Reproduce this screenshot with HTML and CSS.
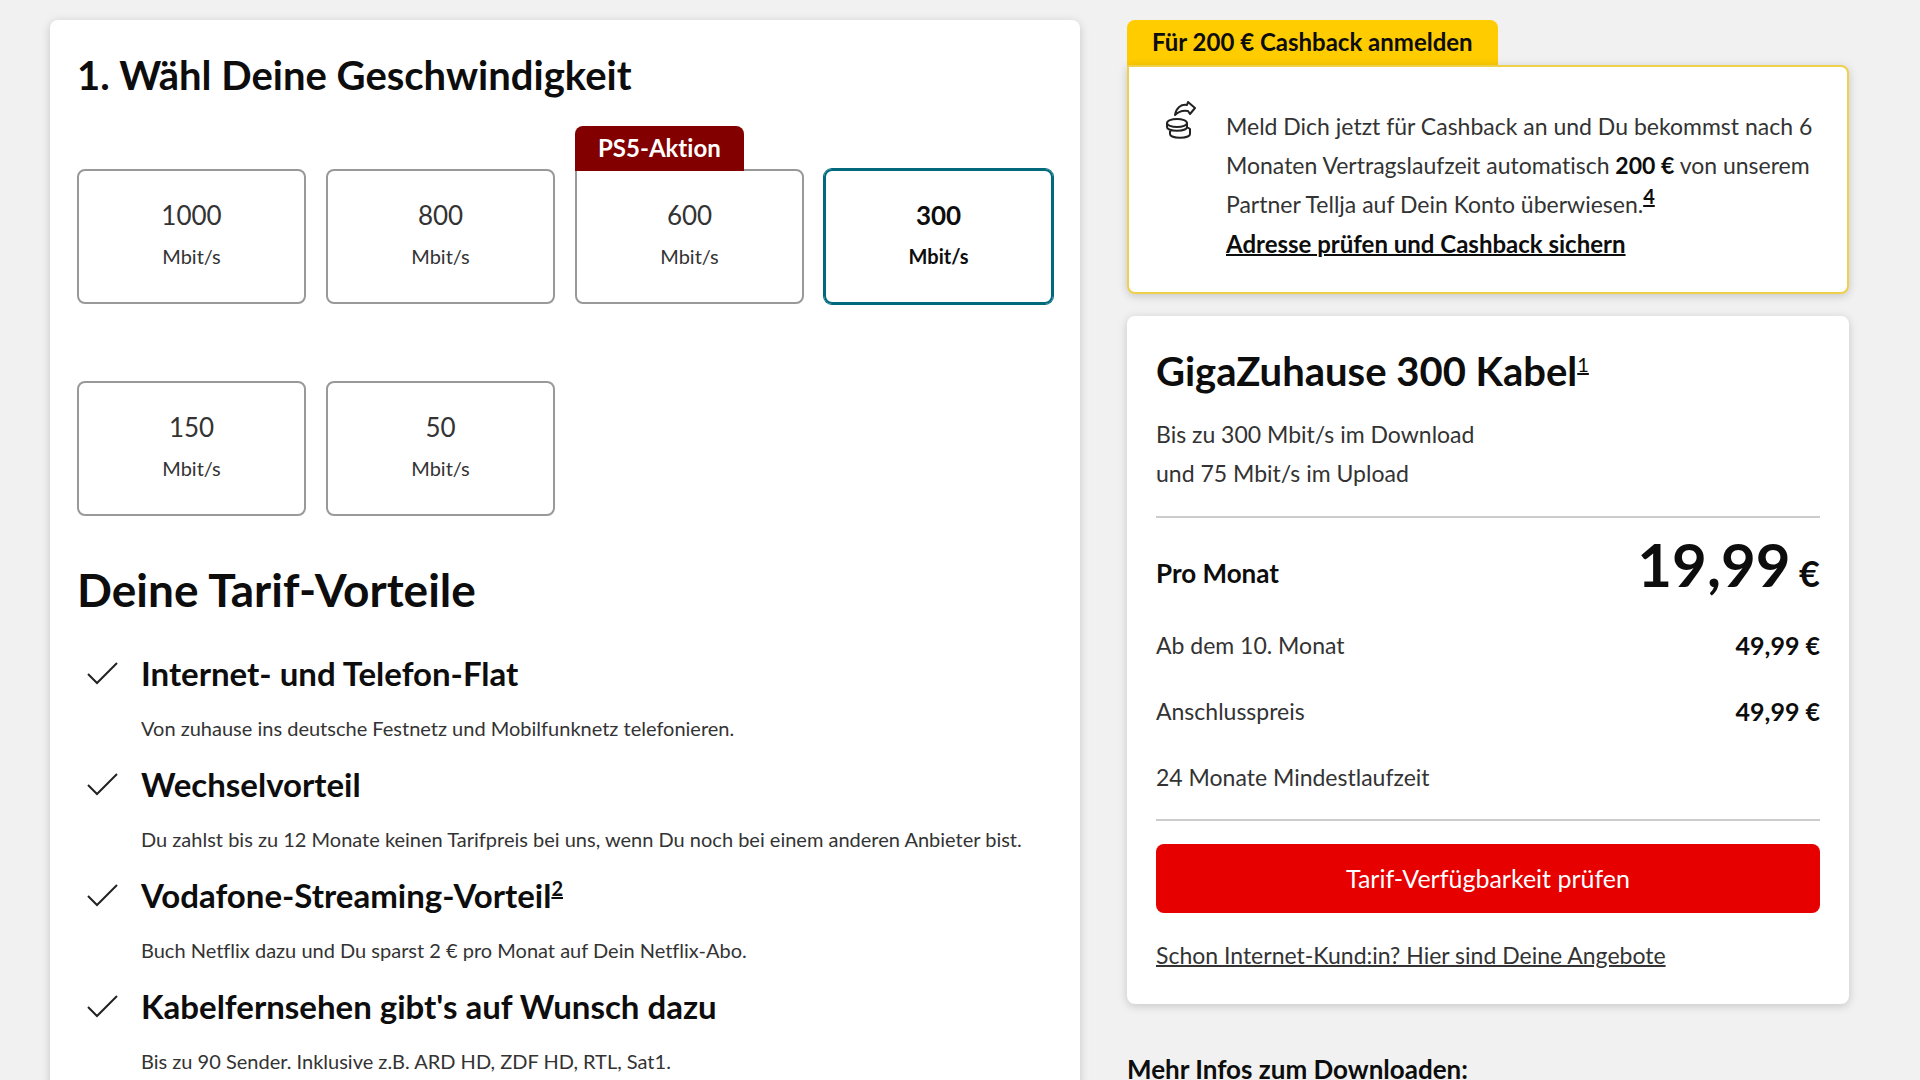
FILE: index.html
```
<!DOCTYPE html>
<html lang="de">
<head>
  <meta charset="utf-8">
  <meta name="viewport" content="width=device-width, initial-scale=1">
  <title>GigaZuhause 300 Kabel</title>
  <link rel="stylesheet" href="styles.css">
</head>
<body>
  <svg width="0" height="0" class="sprite" aria-hidden="true">
    <symbol id="check" viewBox="0 0 36 36">
      <path d="M4 21l9 9L33 10"/>
    </symbol>
  </svg>

  <main class="page">
    <!-- Tariff selection -->
    <section class="card card-main">
      <h1>1. Wähl Deine Geschwindigkeit</h1>

      <div class="speeds" role="radiogroup" aria-label="Geschwindigkeit">
        <label class="speed">
          <input type="radio" name="speed" value="1000">
          <span class="speed-value">1000</span>
          <span class="speed-unit">Mbit/s</span>
        </label>
        <label class="speed">
          <input type="radio" name="speed" value="800">
          <span class="speed-value">800</span>
          <span class="speed-unit">Mbit/s</span>
        </label>
        <label class="speed speed-promo">
          <input type="radio" name="speed" value="600">
          <span class="speed-flag">PS5-Aktion</span>
          <span class="speed-value">600</span>
          <span class="speed-unit">Mbit/s</span>
        </label>
        <label class="speed">
          <input type="radio" name="speed" value="300" checked>
          <span class="speed-value">300</span>
          <span class="speed-unit">Mbit/s</span>
        </label>
        <label class="speed">
          <input type="radio" name="speed" value="150">
          <span class="speed-value">150</span>
          <span class="speed-unit">Mbit/s</span>
        </label>
        <label class="speed">
          <input type="radio" name="speed" value="50">
          <span class="speed-value">50</span>
          <span class="speed-unit">Mbit/s</span>
        </label>
      </div>

      <h2>Deine Tarif-Vorteile</h2>
      <ul class="benefits">
        <li class="benefit">
          <svg class="check"><use href="#check"/></svg>
          <div>
            <h3>Internet- und Telefon-Flat</h3>
            <p>Von zuhause ins deutsche Festnetz und Mobilfunknetz telefonieren.</p>
          </div>
        </li>
        <li class="benefit">
          <svg class="check"><use href="#check"/></svg>
          <div>
            <h3>Wechselvorteil</h3>
            <p>Du zahlst bis zu 12 Monate keinen Tarifpreis bei uns, wenn Du noch bei einem anderen Anbieter bist.</p>
          </div>
        </li>
        <li class="benefit">
          <svg class="check"><use href="#check"/></svg>
          <div>
            <h3>Vodafone-Streaming-Vorteil<sup><a href="#fn2">2</a></sup></h3>
            <p>Buch Netflix dazu und Du sparst 2 € pro Monat auf Dein Netflix-Abo.</p>
          </div>
        </li>
        <li class="benefit">
          <svg class="check"><use href="#check"/></svg>
          <div>
            <h3>Kabelfernsehen gibt's auf Wunsch dazu</h3>
            <p>Bis zu 90 Sender. Inklusive z.B. ARD HD, ZDF HD, RTL, Sat1.</p>
          </div>
        </li>
      </ul>
    </section>

    <aside class="sidebar">
      <!-- Cashback -->
      <section class="cashback">
        <div class="cashback-tab">Für 200 € Cashback anmelden</div>
        <div class="cashback-box">
          <svg class="cashback-icon" viewBox="0 0 40 40" aria-hidden="true">
            <path d="M13 15C14 8 19 4 25 5L26 2l7 6-5 6-2-3C21 10 17 11 13 15z"/>
            <ellipse cx="15" cy="23" rx="10" ry="4"/>
            <path d="M5 23v4c0 5 20 5 20 0v-4M8 30v4c0 5 20 5 20 0v-5l-3-2"/>
          </svg>
          <div class="cashback-text">
            <p>Meld Dich jetzt für Cashback an und Du bekommst nach 6 Monaten Vertragslaufzeit automatisch <strong>200 €</strong> von unserem Partner Tellja auf Dein Konto überwiesen.<sup><a href="#fn4">4</a></sup></p>
            <a class="cashback-link" href="#cashback">Adresse prüfen und Cashback sichern</a>
          </div>
        </div>
      </section>

      <!-- Price summary -->
      <section class="card card-price">
        <h2 class="tariff-name">GigaZuhause 300 Kabel<sup><a href="#fn1">1</a></sup></h2>
        <p class="tariff-info">Bis zu 300 Mbit/s im Download<br>und 75 Mbit/s im Upload</p>
        <dl class="prices">
          <div class="price-row price-main">
            <dt>Pro Monat</dt>
            <dd>19,99 <span class="currency">€</span></dd>
          </div>
          <div class="price-row">
            <dt>Ab dem 10. Monat</dt>
            <dd>49,99 €</dd>
          </div>
          <div class="price-row">
            <dt>Anschlusspreis</dt>
            <dd>49,99 €</dd>
          </div>
          <div class="price-row">
            <dt>24 Monate Mindestlaufzeit</dt>
          </div>
        </dl>
        <button type="button" class="btn">Tarif-Verfügbarkeit prüfen</button>
        <a class="offers-link" href="#angebote">Schon Internet-Kund:in? Hier sind Deine Angebote</a>
      </section>

      <h2 class="downloads">Mehr Infos zum Downloaden:</h2>
    </aside>
  </main>
</body>
</html>
```

FILE: styles.css
```
* {
  box-sizing: border-box;
}
body {
  margin: 0;
  background: #f1f1f1;
  color: #333;
  font-family: Lato, "Open Sans", sans-serif;
  font-size: 23px;
  font-variant-ligatures: none;
  line-height: 39px;
}
h1, h2, h3, p, ul, dl, dd {
  margin: 0;
  padding: 0;
}
h1, h2, h3, strong {
  color: #0d0d0d;
  font-weight: 700;
}
a {
  color: inherit;
  text-decoration-thickness: 2px;
}
sup {
  font-size: 20px;
  line-height: 0;
}
.sprite {
  position: absolute;
}
.page {
  display: grid;
  grid-template-columns: 1030fr 722fr;
  gap: 47px;
  padding: 20px 71px 40px 50px;
}
.card {
  background: #fff;
  border-radius: 8px;
  box-shadow: 0 2px 10px rgba(0, 0, 0, 0.18);
}

/* Tariff selection */
.card-main {
  padding: 31px 27px 40px;
}
h1 {
  font-size: 40px;
  line-height: 48px;
}
.speeds {
  display: grid;
  grid-template-columns: repeat(4, 1fr);
  gap: 77px 20px;
  margin-top: 70px;
}
.speed {
  position: relative;
  display: flex;
  flex-direction: column;
  align-items: center;
  gap: 7px;
  padding: 26px 0 30px;
  border: 2px solid #999;
  border-radius: 8px;
  cursor: pointer;
}
.speed input {
  position: absolute;
  opacity: 0;
}
.speed-value {
  font-size: 26px;
  line-height: 36px;
}
.speed-unit {
  font-size: 20px;
  line-height: 32px;
}
.speed:has(input:checked) {
  border-color: #00697c;
  box-shadow: 0 0 0 1px #00697c;
  color: #0d0d0d;
  font-weight: 700;
}
.speed-promo {
  border-top-left-radius: 0;
}
.speed-flag {
  position: absolute;
  left: -2px;
  bottom: 100%;
  padding: 2px 23px 4px;
  background: #820000;
  border-radius: 8px 8px 0 0;
  color: #fff;
  font-size: 24px;
  font-weight: 700;
}
.card-main h2 {
  margin-top: 46px;
  font-size: 46px;
  line-height: 56px;
}
.benefits {
  display: flex;
  flex-direction: column;
  gap: 20px;
  margin-top: 35px;
  list-style: none;
}
.benefit {
  display: flex;
  gap: 21px;
  padding-left: 7px;
}
.check {
  flex: none;
  width: 36px;
  height: 36px;
  fill: none;
  stroke: #222;
  stroke-width: 2;
}
.benefit h3 {
  font-size: 33px;
  line-height: 40px;
}
.benefit p {
  margin-top: 19px;
  font-size: 20px;
  line-height: 32px;
}

/* Cashback */
.cashback-tab {
  width: fit-content;
  padding: 7px 25px 8px;
  background: #ffcc00;
  border-radius: 8px 8px 0 0;
  color: #0d0d0d;
  font-size: 24px;
  font-weight: 700;
  line-height: 30px;
}
.cashback-box {
  display: flex;
  gap: 24px;
  padding: 33px 24px 28px 33px;
  background: #fff;
  border: 2px solid #efd04a;
  border-radius: 0 8px 8px 8px;
  box-shadow: 0 2px 10px rgba(0, 0, 0, 0.18);
}
.cashback-icon {
  flex: none;
  width: 40px;
  height: 40px;
  fill: none;
  stroke: #222;
  stroke-width: 2;
  stroke-linejoin: round;
}
.cashback-text {
  padding-top: 7px;
}
.cashback-text a {
  color: #0d0d0d;
  font-weight: 700;
}
.cashback-link {
  font-size: 24px;
}

/* Price summary */
.card-price {
  margin-top: 22px;
  padding: 31px 29px 29px;
}
.tariff-name {
  font-size: 40px;
  line-height: 48px;
}
.tariff-name sup {
  font-weight: 400;
}
.tariff-info {
  margin-top: 20px;
}
.prices {
  display: flex;
  flex-direction: column;
  gap: 27px;
  margin: 23px 0;
  padding: 11px 0 22px;
  border-top: 2px solid #ccc;
  border-bottom: 2px solid #ccc;
}
.price-row {
  display: flex;
  justify-content: space-between;
  align-items: flex-end;
}
.price-row dd {
  color: #0d0d0d;
  font-size: 25px;
  font-weight: 700;
}
.price-main dt {
  color: #0d0d0d;
  font-size: 26px;
  font-weight: 700;
  line-height: 52px;
}
.price-main dd {
  font-size: 60px;
  line-height: 70px;
}
.currency {
  margin-left: -6px;
  font-size: 36px;
  line-height: 1;
}
.btn {
  display: block;
  width: 100%;
  padding: 15px 24px;
  background: #e60000;
  border: none;
  border-radius: 8px;
  color: #fff;
  font: inherit;
  font-size: 25px;
  cursor: pointer;
}
.offers-link {
  display: block;
  width: fit-content;
  margin-top: 23px;
}
.downloads {
  margin-top: 47px;
  font-size: 26px;
  line-height: 36px;
}
```
